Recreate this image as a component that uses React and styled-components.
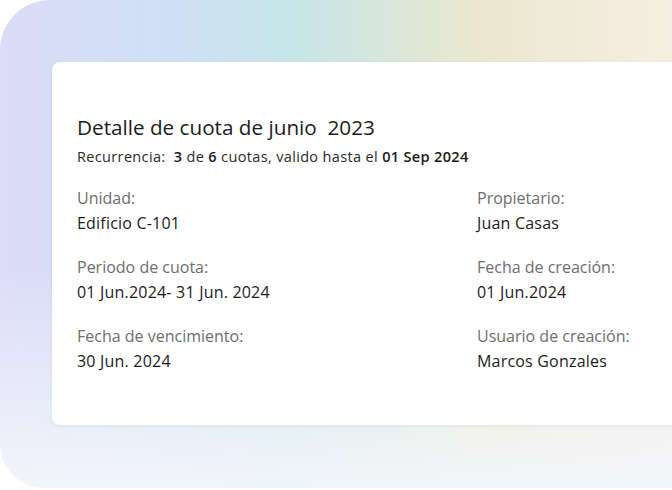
import styled, { createGlobalStyle } from 'styled-components'

const GlobalStyle = createGlobalStyle`
  html, body {
    margin: 0;
    padding: 0;
    background: #ffffff;
    overflow: hidden;
  }
  body {
    font-family: 'Open Sans', 'Noto Sans', sans-serif;
  }
`

const details = [
  { label: 'Unidad:', value: 'Edificio C-101' },
  { label: 'Propietario:', value: 'Juan Casas' },
  { label: 'Periodo de cuota:', value: '01 Jun.2024- 31 Jun. 2024' },
  { label: 'Fecha de creación:', value: '01 Jun.2024' },
  { label: 'Fecha de vencimiento:', value: '30 Jun. 2024' },
  { label: 'Usuario de creación:', value: 'Marcos Gonzales' },
]

function App() {
  return (
    <>
      <GlobalStyle />
      <Page>
        <Backdrop>
          <Card>
            <Title>Detalle de cuota de junio&nbsp; 2023</Title>
            <Subtitle>
              Recurrencia:&nbsp; <b>3</b> de <b>6</b> cuotas, valido hasta el <b>01 Sep 2024</b>
            </Subtitle>
            <Grid>
              {details.map((d) => (
                <Field key={d.label}>
                  <Label>{d.label}</Label>
                  <Value>{d.value}</Value>
                </Field>
              ))}
            </Grid>
          </Card>
        </Backdrop>
      </Page>
    </>
  )
}

const Page = styled.div`
  width: 672px;
  height: 490px;
  overflow: hidden;
  background: #ffffff;
`

const Backdrop = styled.div`
  width: 760px;
  height: 488px;
  box-sizing: border-box;
  border-radius: 50px 0 0 44px;
  padding: 62px 0 0 52px;
  background:
    linear-gradient(180deg, rgba(255, 255, 255, 0) 0%, rgba(244, 246, 251, 0) 55%, rgba(244, 246, 251, 0.95) 100%),
    linear-gradient(90deg, #dcdcf8 0%, #cfe0f6 22%, #c6e5e8 38%, #e9e8cf 62%, #f3ecdc 80%, #f6f2ea 100%);
`

const Card = styled.div`
  height: 363px;
  box-sizing: border-box;
  background: #ffffff;
  border-radius: 8px 0 0 8px;
  box-shadow: 0 1px 4px rgba(120, 130, 160, 0.12);
  padding: 51px 0 0 25px;
  color: #1c1c1c;
`

const Title = styled.h1`
  margin: 0;
  font-size: 20.7px;
  font-weight: 400;
  line-height: 28px;
`

const Subtitle = styled.p`
  margin: 6px 0 0;
  font-size: 14.5px;
  line-height: 20px;
  letter-spacing: 0.35px;
  color: #2a2a2a;

  b {
    font-weight: 600;
    color: #1a1a1a;
  }
`

const Grid = styled.div`
  display: grid;
  grid-template-columns: 400px 200px;
  row-gap: 23px;
  margin-top: 21px;
`

const Field = styled.div`
  display: flex;
  flex-direction: column;
  gap: 4px;
`

const Label = styled.span`
  font-size: 16px;
  line-height: 21px;
  color: #6e6e6e;
`

const Value = styled.span`
  font-size: 16px;
  line-height: 21px;
  letter-spacing: 0.2px;
  color: #1c1c1c;
`

export default App
